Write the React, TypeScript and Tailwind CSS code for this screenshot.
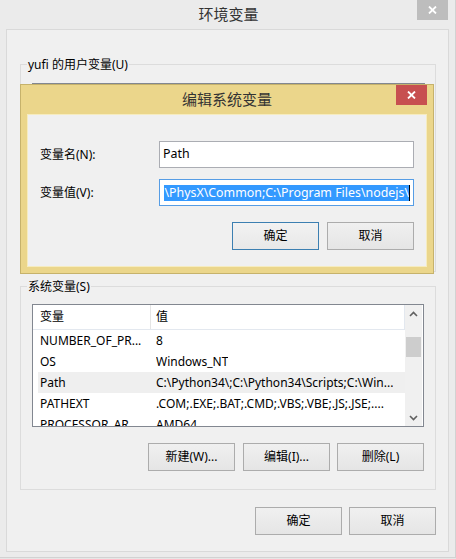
import React from "react";

function CloseX() {
  return (
    <svg width="9" height="8" viewBox="0 0 9 8">
      <path d="M1 0.5 L8 7.5 M8 0.5 L1 7.5" stroke="white" strokeWidth="1.8" />
    </svg>
  );
}

function Btn({ label, focused = false }: { label: string; focused?: boolean }) {
  return (
    <div
      className={
        focused
          ? "flex h-[28px] w-[87px] items-center justify-center border border-[#3c7fb1] bg-linear-to-b from-[#f2f2f2] to-[#e8e8e8] text-[12px] leading-none text-black"
          : "flex h-[28px] w-[87px] items-center justify-center border border-[#acacac] bg-linear-to-b from-[#f0f0f0] to-[#e5e5e5] text-[12px] leading-none text-black"
      }
    >
      {label}
    </div>
  );
}

const rows: { name: string; value: string; hi?: boolean }[] = [
  { name: "NUMBER_OF_PR...", value: "8" },
  { name: "OS", value: "Windows_NT" },
  { name: "Path", value: "C:\\Python34\\;C:\\Python34\\Scripts;C:\\Win...", hi: true },
  { name: "PATHEXT", value: ".COM;.EXE;.BAT;.CMD;.VBS;.VBE;.JS;.JSE;...." },
  { name: "PROCESSOR_AR...", value: "AMD64" },
];

export default function App() {
  return (
    <div className="relative h-[559px] w-[456px] overflow-hidden bg-[#e6e6e6] font-['Noto_Sans','Noto_Sans_CJK_SC',sans-serif] text-black">
      <div className="h-[558px] w-[456px] border-r border-b border-[#d2d2d2] bg-[#ebebeb]">
        {/* title bar */}
        <div className="relative flex h-[29px] items-center justify-center text-[15px] leading-none text-[#333]">
          <span className="pl-[2px]">环境变量</span>
          <div className="absolute top-0 right-[7px] flex h-[20px] w-[31px] items-center justify-center bg-[#bdbdbd]">
            <CloseX />
          </div>
        </div>

        {/* content panel */}
        <div className="ml-[6px] flex h-[523px] w-[443px] flex-col border border-[#d9d9d9] bg-[#f0f0f0] pt-[34px] pr-[12px] pl-[13px]">
          {/* user group */}
          <div className="relative h-[208px] border border-[#dcdcdc] pt-[18px] pr-[10px] pl-[11px]">
            <span className="absolute -top-[8px] left-[6px] bg-[#f0f0f0] px-[1px] text-[12px] leading-[16px]">
              yufi 的用户变量(U)
            </span>
            <div className="h-[150px] border border-[#828790] bg-white" />
          </div>

          {/* system group */}
          <div className="relative mt-[14px] h-[204px] border border-[#dcdcdc] pt-[17px] pr-[11px] pl-[11px]">
            <span className="absolute -top-[8px] left-[6px] bg-[#f0f0f0] px-[1px] text-[12px] leading-[16px]">
              系统变量(S)
            </span>
            <div className="flex h-[123px] w-[392px] border border-[#828790] bg-white">
              <div className="flex w-[372px] flex-col overflow-hidden">
                <div className="flex h-[25px] shrink-0 items-center border-r border-b border-[#e3e8ef] text-[12px]">
                  <div className="flex h-full w-[118px] items-center border-r border-[#e5e5e5] pl-[7px]">变量</div>
                  <div className="pl-[5px]">值</div>
                </div>
                {rows.map((r) => (
                  <div
                    key={r.name}
                    className={
                      r.hi
                        ? "ml-[5px] flex h-[21px] shrink-0 items-center bg-[#efefef] text-[12px] whitespace-nowrap"
                        : "ml-[5px] flex h-[21px] shrink-0 items-center text-[12px] whitespace-nowrap"
                    }
                  >
                    <div className="w-[118px] shrink-0 overflow-hidden pl-[2px]">{r.name}</div>
                    <div className="overflow-hidden">{r.value}</div>
                  </div>
                ))}
              </div>
              <div className="flex w-[17px] flex-col bg-[#f0f0f0]">
                <div className="flex h-[17px] items-center justify-center">
                  <svg width="9" height="6" viewBox="0 0 9 6">
                    <path d="M1 5 L4.5 1.5 L8 5" fill="none" stroke="#606060" strokeWidth="1.6" />
                  </svg>
                </div>
                <div className="flex-1">
                  <div className="mx-[1px] mt-[15px] h-[20px] bg-[#cdcdcd]" />
                </div>
                <div className="flex h-[17px] items-center justify-center">
                  <svg width="9" height="6" viewBox="0 0 9 6">
                    <path d="M1 1 L4.5 4.5 L8 1" fill="none" stroke="#606060" strokeWidth="1.6" />
                  </svg>
                </div>
              </div>
            </div>
            <div className="mt-[16px] flex justify-end">
              <Btn label="新建(W)..." />
              <div className="ml-[8px]">
                <Btn label="编辑(I)..." />
              </div>
              <div className="ml-[7px]">
                <Btn label="删除(L)" />
              </div>
            </div>
          </div>

          {/* bottom buttons */}
          <div className="mt-[17px] flex justify-end gap-[7px]">
            <Btn label="确定" />
            <Btn label="取消" />
          </div>
        </div>
      </div>

      {/* edit dialog window */}
      <div className="absolute top-[84px] left-[20px] flex h-[190px] w-[414px] flex-col border border-[#c6b26b] bg-[#ebd68b] px-[6px] pb-[6px]">
        <div className="relative flex h-[29px] shrink-0 items-center justify-center text-[15px] leading-none text-[#333]">
          编辑系统变量
          <div className="absolute top-0 right-0 flex h-[20px] w-[31px] items-center justify-center bg-[#c75050]">
            <CloseX />
          </div>
        </div>
        <div className="flex h-[153px] flex-col border border-[#f6ecc0] bg-[#f0f0f0] pt-[26px] pr-[12px] pl-[12px]">
          <div className="flex h-[27px] items-center">
            <div className="w-[119px] text-[12px]">变量名(N):</div>
            <div className="flex h-[27px] w-[255px] items-center border border-[#abadb3] bg-white pl-[3px] text-[12.4px]">
              Path
            </div>
          </div>
          <div className="mt-[11px] flex h-[27px] items-center">
            <div className="w-[119px] text-[12px]">变量值(V):</div>
            <div className="flex h-[27px] w-[255px] items-center justify-end overflow-hidden border border-[#569de5] bg-white pr-[3px] text-[12.4px] whitespace-nowrap">
              <span className="bg-[#3399ff] leading-[16px] text-white">\PhysX\Common;C:\Program Files\nodejs\</span>
              <span className="h-[16px] w-[1px] shrink-0 bg-black" />
            </div>
          </div>
          <div className="mt-[16px] flex justify-end gap-[8px]">
            <Btn label="确定" focused />
            <Btn label="取消" />
          </div>
        </div>
      </div>
    </div>
  );
}
